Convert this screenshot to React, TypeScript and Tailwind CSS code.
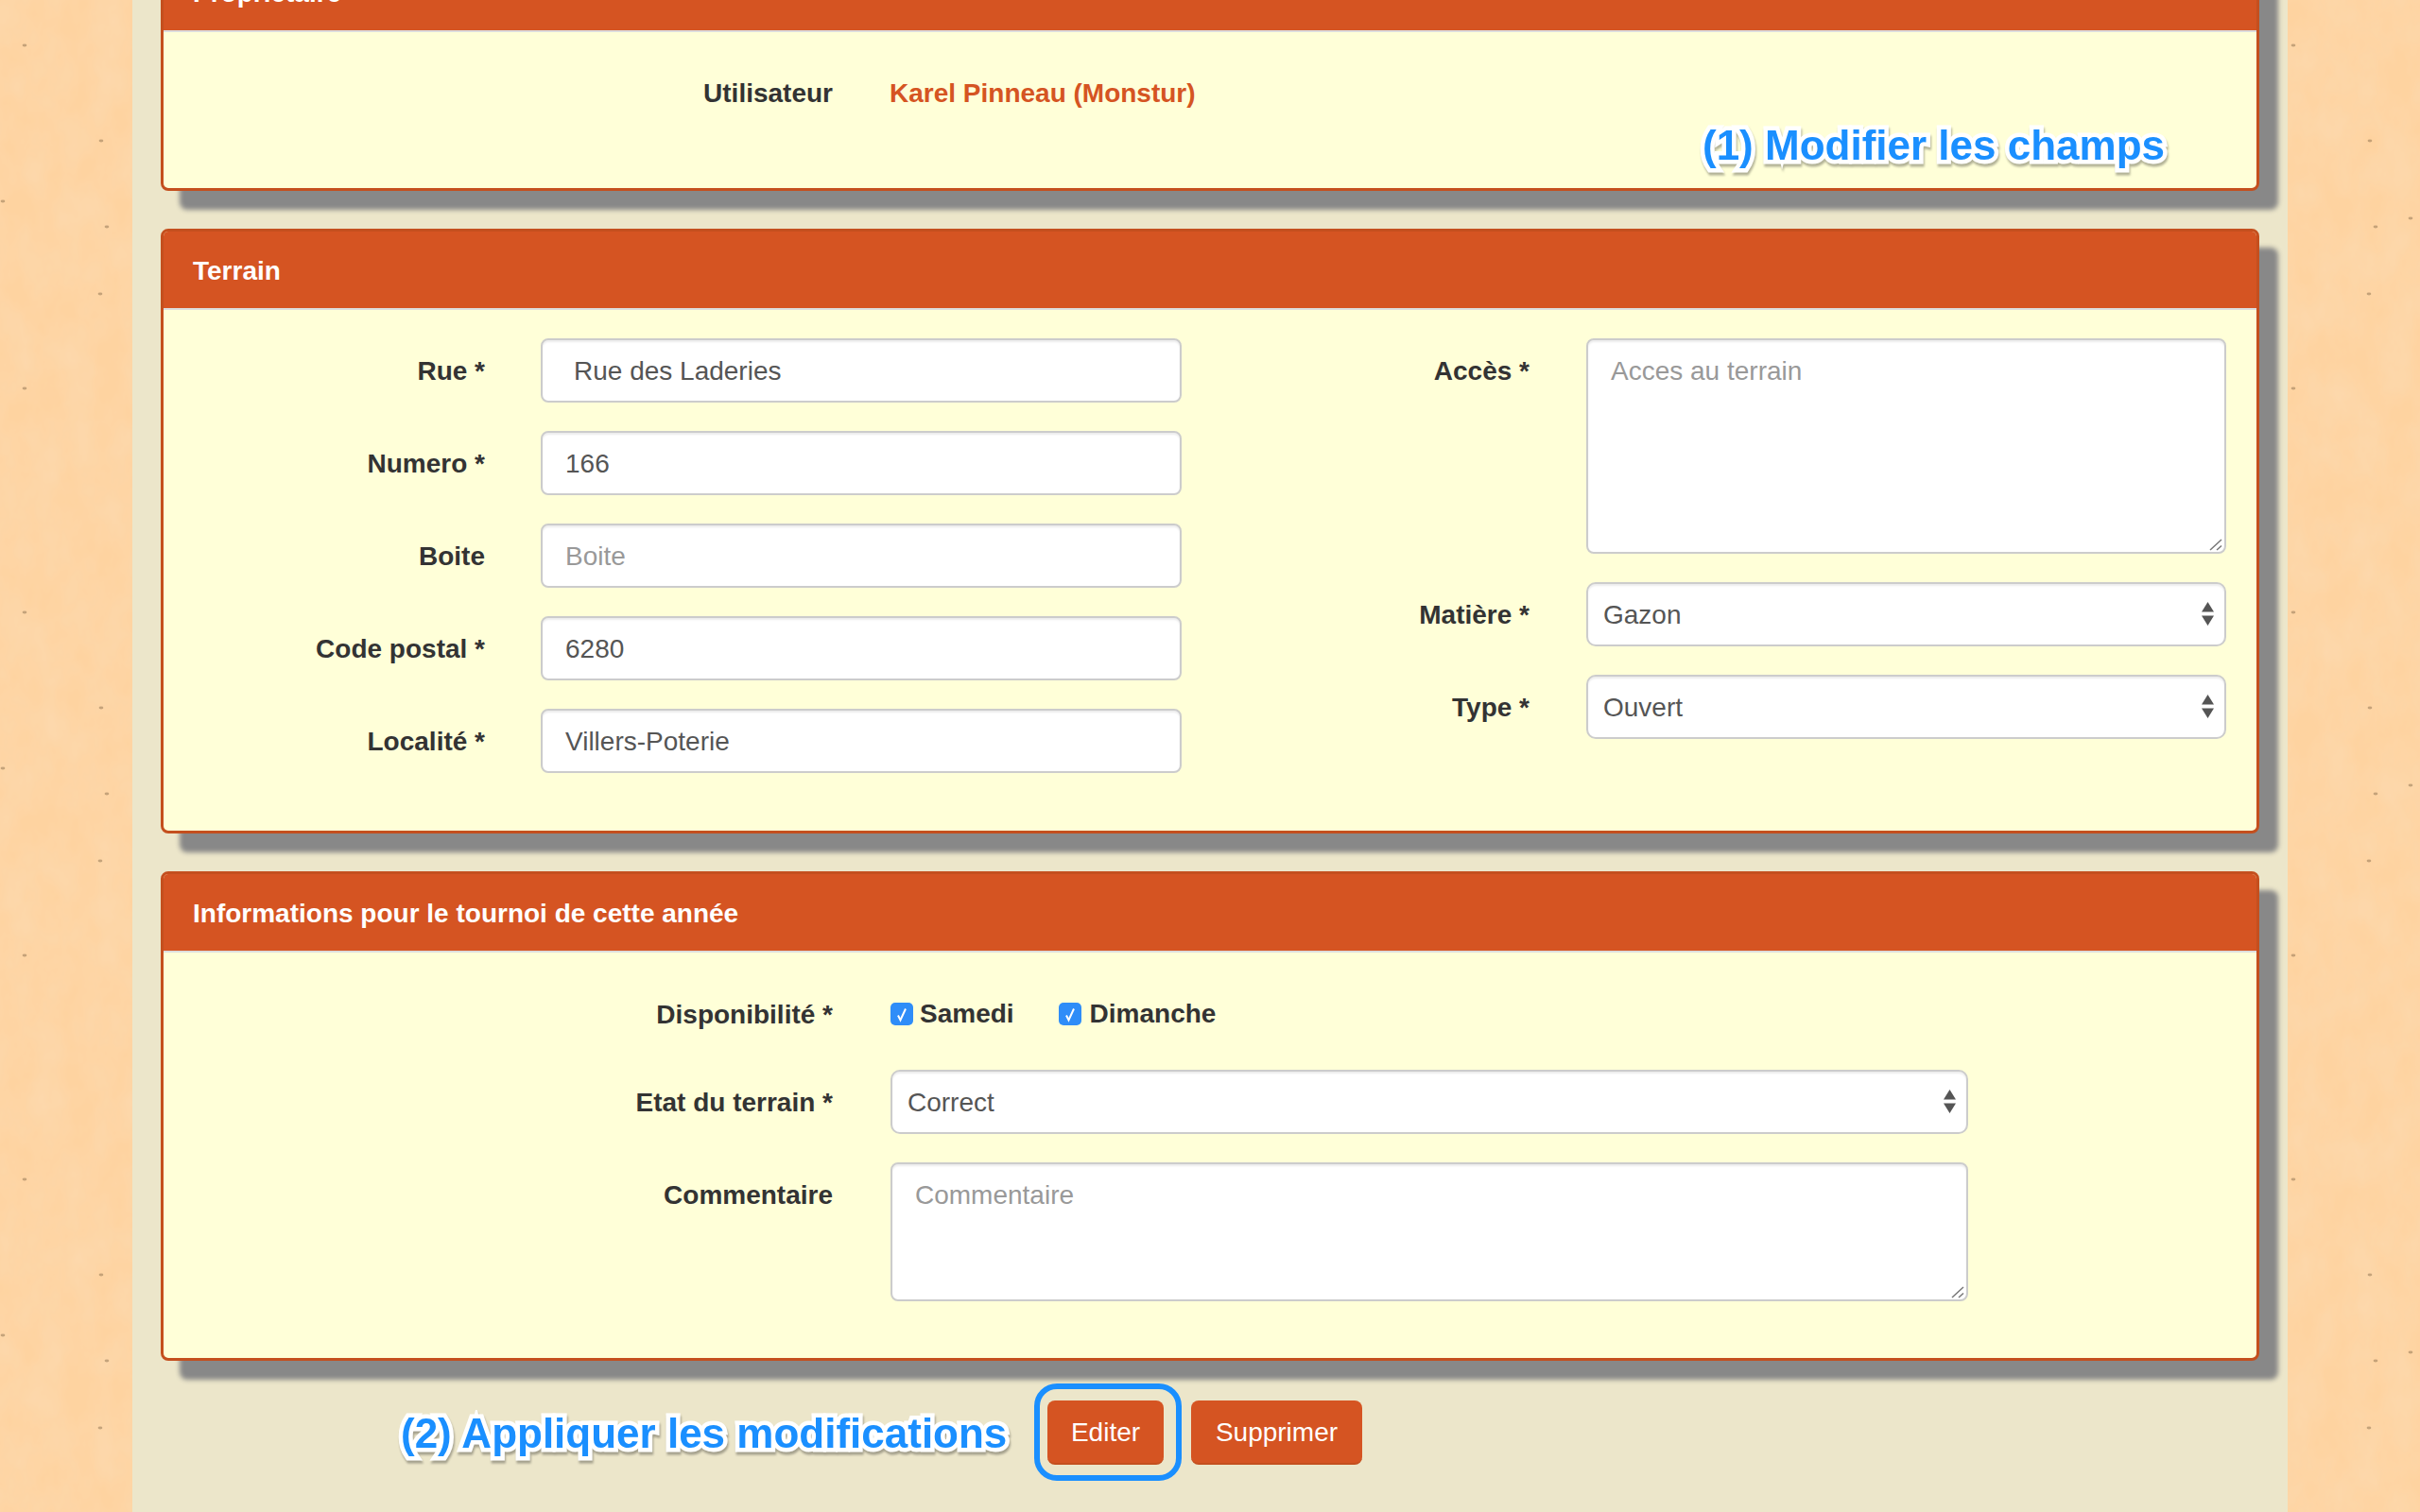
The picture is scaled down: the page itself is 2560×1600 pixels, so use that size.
import React from 'react';

// the background image repeats every 600px in both directions
const specks: [number, number][] = [
  [26, 48], [107, 149], [3, 213], [113, 240], [106, 311], [26, 411], [150, 231],
];

const PaperStrip: React.FC<{ id: string; seed: number; shift: number }> = ({ id, seed, shift }) => (
  <svg width="140" height="1600" className="block shrink-0 bg-[#fed3a0]">
    <defs>
      <filter id={`${id}-noise`} x="0" y="0" width="100%" height="100%">
        <feTurbulence type="fractalNoise" baseFrequency="0.03 0.02" numOctaves="4" seed={seed} />
        <feColorMatrix type="matrix" values="0 0 0 0 0.96  0 0 0 0 0.76  0 0 0 0 0.55  0.5 0 0 0 -0.12" />
      </filter>
      <pattern id={`${id}-specks`} width="600" height="600" patternUnits="userSpaceOnUse" patternTransform={`translate(${shift} 0)`}>
        {specks.map(([x, y]) => (
          <ellipse key={`${x}-${y}`} cx={x} cy={y} rx="2.4" ry="1.4" fill="#8c6f4e" opacity="0.5" />
        ))}
      </pattern>
    </defs>
    <rect width="140" height="1600" filter={`url(#${id}-noise)`} />
    <rect width="140" height="1600" fill={`url(#${id}-specks)`} />
  </svg>
);

const Panel: React.FC<{ title: string; className?: string; children: React.ReactNode }> = ({ title, className, children }) => (
  <section className={`rounded-[8px] border-[3px] border-[#c44f1e] bg-[#ffffd8] shadow-[20px_20px_5px_#888888] ${className ?? ''}`}>
    <div className="box-content flex h-[81px] items-center rounded-t-[5px] border-b-2 border-[#dddddd] bg-[#d55422] px-[31px] text-[28px] font-bold text-white">
      <span className="mt-[2px]">{title}</span>
    </div>
    {children}
  </section>
);

const inputClass =
  'h-[68px] w-full rounded-[8px] border-2 border-[#cccccc] bg-white px-[24px] pt-[2px] text-[28px] text-[#555555] shadow-[inset_0_2px_2px_rgba(0,0,0,0.075)] outline-none placeholder:text-[#999999]';

const Label: React.FC<{ children: React.ReactNode; className: string }> = ({ children, className }) => (
  <label className={`flex h-[68px] shrink-0 items-center justify-end pt-[2px] text-[28px] font-bold text-[#333333] ${className}`}>
    {children}
  </label>
);

const Select: React.FC<{ value: string }> = ({ value }) => (
  <div className="relative w-full">
    <select
      defaultValue={value}
      className="h-[68px] w-full appearance-none rounded-[10px] border-2 border-[#cccccc] bg-white pl-[16px] pt-[2px] text-[28px] text-[#555555] shadow-[inset_0_2px_2px_rgba(0,0,0,0.075)] outline-none"
    >
      <option>{value}</option>
    </select>
    <svg width="13" height="25" viewBox="0 0 13 25" className="absolute right-[13px] top-[21px]">
      <path d="M6.5 0 L13 10.5 L0 10.5 Z M0 14.5 L13 14.5 L6.5 25 Z" fill="#555555" />
    </svg>
  </div>
);

const TextArea: React.FC<{ placeholder: string; className: string }> = ({ placeholder, className }) => (
  <div className={`relative ${className}`}>
    <textarea
      placeholder={placeholder}
      className="block h-full w-full resize-none rounded-[8px] border-2 border-[#cccccc] bg-white px-[24px] pb-[12px] pt-[13px] text-[28px] leading-[40px] shadow-[inset_0_2px_2px_rgba(0,0,0,0.075)] outline-none placeholder:text-[#999999]"
    />
    <svg width="14" height="13" viewBox="0 0 14 13" className="absolute bottom-[3px] right-[4px]">
      <path d="M1 12 L13 1 M8 12 L13 7.5" fill="none" stroke="#777777" strokeWidth="1.5" />
    </svg>
  </div>
);

const Check: React.FC = () => (
  <span className="flex h-[24px] w-[24px] shrink-0 items-center justify-center rounded-[5px] bg-[#2f8df8]">
    <svg width="14" height="18" viewBox="0 0 14 18">
      <path d="M3 10.5 L5.5 15.5 L11 3.5" fill="none" stroke="white" strokeWidth="2" />
    </svg>
  </span>
);

const Annotation: React.FC<{ children: React.ReactNode; className: string }> = ({ children, className }) => (
  <span
    className={`absolute whitespace-nowrap text-[44px] font-bold text-[#1a8fff] [-webkit-text-stroke:9px_white] [paint-order:stroke_fill] drop-shadow-[1px_3px_1px_rgba(0,0,0,0.3)] ${className}`}
  >
    {children}
  </span>
);

export default function App() {
  return (
    <div className="flex h-[1600px] overflow-hidden bg-[#ece6ca] font-['Liberation_Sans',Arial,sans-serif]">
      <PaperStrip id="paper-left" seed={4} shift={0} />

      <main className="relative w-[2280px] shrink-0 px-[30px]">
        {/* Propriétaire */}
        <Panel title="Propriétaire" className="relative mt-[-52px]">
          <div className="flex h-[165px] items-start pt-[30px]">
            <Label className="w-[708px]">Utilisateur</Label>
            <span className="ml-[60px] flex h-[68px] items-center pt-[2px] text-[28px] font-bold text-[#d55422]">
              Karel Pinneau (Monstur)
            </span>
            <Annotation className="left-[1628px] top-[170px]">(1) Modifier les champs</Annotation>
          </div>
        </Panel>

        {/* Terrain */}
        <Panel title="Terrain" className="mt-10">
          <div className="flex pb-[61px] pt-[30px]">
            <div className="flex w-[1107px] flex-col gap-[30px]">
              {[
                { label: 'Rue *', value: 'Rue des Laderies', cls: 'pl-[33px]' },
                { label: 'Numero *', value: '166' },
                { label: 'Boite', placeholder: 'Boite' },
                { label: 'Code postal *', value: '6280' },
                { label: 'Localité *', value: 'Villers-Poterie' },
              ].map((row) => (
                <div key={row.label} className="flex">
                  <Label className="w-[340px]">{row.label}</Label>
                  <div className="ml-[59px] w-[678px]">
                    <input
                      defaultValue={row.value}
                      placeholder={row.placeholder}
                      className={`${inputClass} ${row.cls ?? ''}`}
                    />
                  </div>
                </div>
              ))}
            </div>

            <div className="flex w-[1107px] flex-col gap-[30px]">
              <div className="flex">
                <Label className="w-[338px]">Accès *</Label>
                <TextArea placeholder="Acces au terrain" className="ml-[60px] h-[228px] w-[677px]" />
              </div>
              <div className="flex">
                <Label className="w-[338px]">Matière *</Label>
                <div className="ml-[60px] w-[677px]"><Select value="Gazon" /></div>
              </div>
              <div className="flex">
                <Label className="w-[338px]">Type *</Label>
                <div className="ml-[60px] w-[677px]"><Select value="Ouvert" /></div>
              </div>
            </div>
          </div>
        </Panel>

        {/* Informations */}
        <Panel title="Informations pour le tournoi de cette année" className="mt-10">
          <div className="flex flex-col pb-[60px] pt-[31px]">
            <div className="flex">
              <Label className="w-[708px]">Disponibilité *</Label>
              <div className="ml-[61px] flex h-[68px] items-center text-[28px] font-bold text-[#333333]">
                <Check />
                <span className="ml-[7px]">Samedi</span>
                <span className="ml-[47px]"><Check /></span>
                <span className="ml-[9px]">Dimanche</span>
              </div>
            </div>
            <div className="mt-[25px] flex">
              <Label className="w-[708px]">Etat du terrain *</Label>
              <div className="ml-[61px] w-[1140px]"><Select value="Correct" /></div>
            </div>
            <div className="mt-[30px] flex">
              <Label className="w-[708px]">Commentaire</Label>
              <TextArea placeholder="Commentaire" className="ml-[61px] h-[147px] w-[1140px]" />
            </div>
          </div>
        </Panel>

        {/* Actions */}
        <div className="relative mt-[42px] flex pl-[938px]">
          <Annotation className="left-[254px] top-[2px]">(2) Appliquer les modifications</Annotation>
          <div className="relative">
            <button className="h-[68px] w-[123px] rounded-[8px] border-b-2 border-[#c44f1e] bg-[#d55422] pt-[2px] text-[28px] text-white">
              Editer
            </button>
            <span className="absolute left-[-14px] top-[-18px] h-[103px] w-[156px] rounded-[24px] border-[6px] border-[#1a8fff]" />
          </div>
          <button className="ml-[29px] h-[68px] w-[181px] rounded-[8px] border-b-2 border-[#c44f1e] bg-[#d55422] pt-[2px] text-[28px] text-white">
            Supprimer
          </button>
        </div>
      </main>

      <PaperStrip id="paper-right" seed={9} shift={-20} />
    </div>
  );
}
